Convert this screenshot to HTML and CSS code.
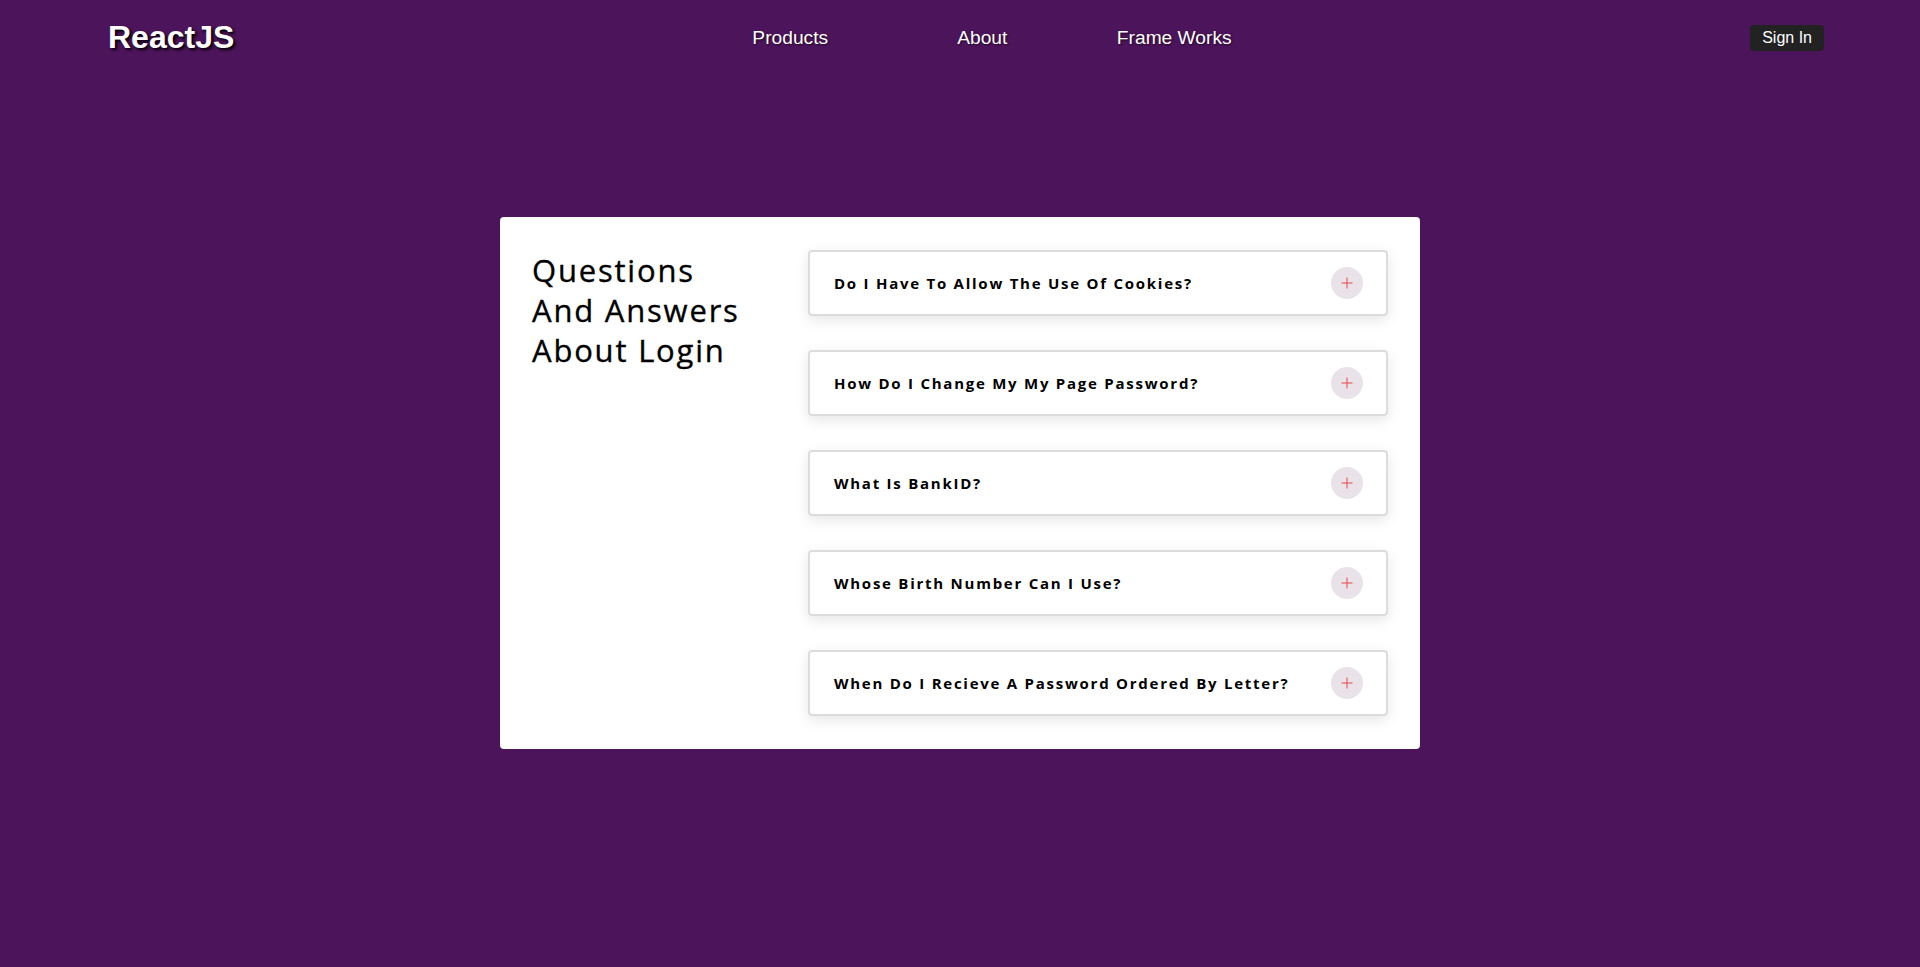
FILE: index.html
```html
<!DOCTYPE html>
<html lang="en">
<head>
<meta charset="utf-8">
<title>ReactJS FAQ</title>
<link rel="stylesheet" href="styles.css">
</head>
<body>
<header class="header">
  <div class="logo">ReactJS</div>
  <nav class="nav">
    <a class="nav-link" href="#">Products</a>
    <a class="nav-link" href="#">About</a>
    <a class="nav-link" href="#">Frame Works</a>
  </nav>
  <button class="signin">Sign In</button>
</header>
<main class="card">
  <h2 class="title">Questions<br>And Answers<br>About Login</h2>
  <div class="faq">
    <div class="item"><span class="question">Do I Have To Allow The Use Of Cookies?</span><span class="plus"></span></div>
    <div class="item"><span class="question">How Do I Change My My Page Password?</span><span class="plus"></span></div>
    <div class="item"><span class="question">What Is BankID?</span><span class="plus"></span></div>
    <div class="item"><span class="question">Whose Birth Number Can I Use?</span><span class="plus"></span></div>
    <div class="item"><span class="question">When Do I Recieve A Password Ordered By Letter?</span><span class="plus"></span></div>
  </div>
</main>
</body>
</html>
```
FILE: styles.css
```css
html, body {
  margin: 0;
  padding: 0;
}
body {
  background: #4c145a;
  min-height: 967px;
  font-family: "Open Sans", "Noto Sans", sans-serif;
}
.header {
  display: flex;
  align-items: center;
  justify-content: space-between;
  height: 75px;
  padding: 0 96px 0 108px;
}
.logo {
  font-family: "Liberation Sans", Arial, sans-serif;
  font-weight: bold;
  font-size: 32px;
  color: #fff;
  text-shadow: 2px 2px 3px #000;
}
.nav {
  display: flex;
  margin-right: 20px;
}
.nav-link {
  width: 192px;
  text-align: center;
  font-family: "Liberation Sans", Arial, sans-serif;
  font-size: 19.2px;
  color: #fff;
  text-decoration: none;
  text-shadow: 1px 1px 2px rgba(0, 0, 0, 0.6);
}
.signin {
  background: #222;
  color: #fff;
  border: none;
  border-radius: 4px;
  font-family: "Liberation Sans", Arial, sans-serif;
  font-size: 16px;
  height: 26px;
  padding: 0 12px;
}
.card {
  width: 920px;
  box-sizing: border-box;
  margin: 142px auto 0;
  background: #fff;
  border-radius: 4px;
  padding: 33px 32px;
  display: grid;
  grid-template-columns: 276px 1fr;
}
.title {
  margin: 0;
  font-weight: 500;
  font-size: 31px;
  line-height: 40px;
  letter-spacing: 1.8px;
  color: #000;
  -webkit-text-stroke: 0.35px #000;
}
.faq {
  display: flex;
  flex-direction: column;
  gap: 34px;
}
.item {
  display: flex;
  align-items: center;
  justify-content: space-between;
  border: 2px solid #dcdcdc;
  border-radius: 4px;
  box-shadow: 0 4px 14px rgba(0, 0, 0, 0.1);
  padding: 15px 23px 15px 24px;
}
.question {
  font-weight: bold;
  font-size: 15px;
  letter-spacing: 1.75px;
  color: #000;
}
.plus {
  width: 32px;
  height: 32px;
  border-radius: 50%;
  background: #e9e3e9;
  position: relative;
  flex: none;
}
.plus::before,
.plus::after {
  content: "";
  position: absolute;
  background: #e8474a;
  left: 50%;
  top: 50%;
  transform: translate(-50%, -50%);
}
.plus::before {
  width: 11px;
  height: 1px;
}
.plus::after {
  width: 1px;
  height: 11px;
}
```
